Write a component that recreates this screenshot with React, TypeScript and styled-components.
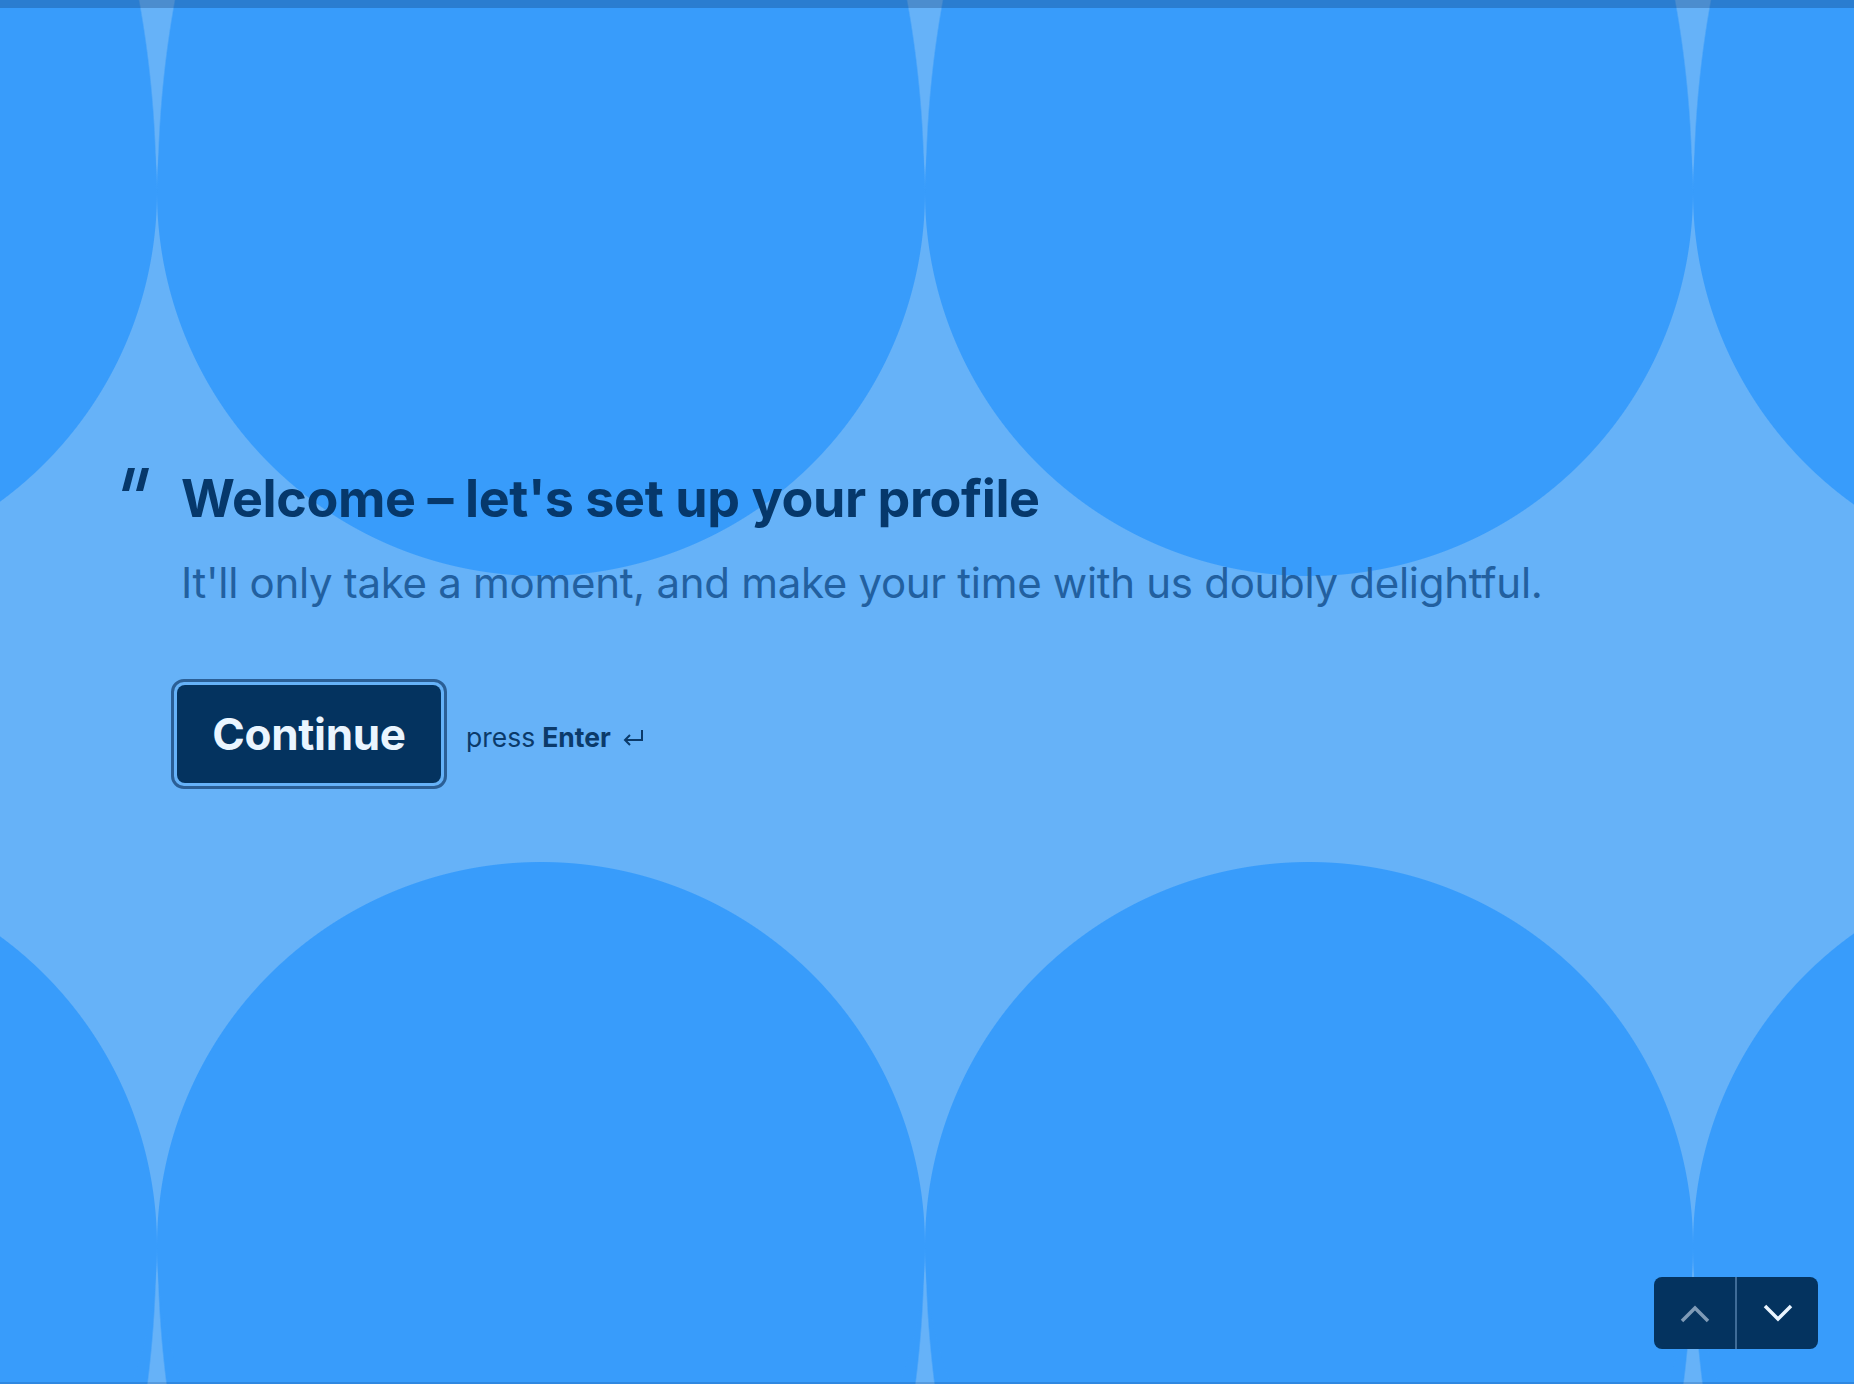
import React from "react";
import styled, { createGlobalStyle } from "styled-components";

const GlobalStyle = createGlobalStyle`
  html, body, #root { margin: 0; padding: 0; height: 100%; }
  body { font-family: Inter, "Noto Sans", "Liberation Sans", sans-serif; }
  * { box-sizing: border-box; }
`;

const CIRCLE = "#389cfb";
const LIGHT = "#66b2f8";

const Page = styled.div`
  position: relative;
  height: 100vh;
  overflow: hidden;
  display: flex;
  flex-direction: column;
  background-color: ${LIGHT};
  background-image:
    radial-gradient(ellipse 384px 650px at 384px 192px, ${CIRCLE} 99.6%, transparent 100%),
    radial-gradient(circle 384px at 384px 192px, ${CIRCLE} 383.5px, transparent 384.5px),
    radial-gradient(circle 384px at 384px 1246px, ${CIRCLE} 383.5px, transparent 384.5px),
    radial-gradient(ellipse 384px 650px at 384px 0px, ${CIRCLE} 99.6%, transparent 100%);
  background-size: 768px 192px, 768px 1384px, 768px 1384px, 768px 140px;
  background-position: 157px 0, 157px 0, 157px 0, 157px 1246px;
  background-repeat: repeat-x, repeat-x, repeat-x, repeat-x;
`;

const ProgressTrack = styled.div`
  height: 8px;
  flex: none;
  background: rgba(0, 30, 80, 0.25);
`;

const Main = styled.main`
  flex: 1;
  padding: 460px 0 0 122px;
`;

const Question = styled.section`
  display: flex;
  align-items: flex-start;
`;

const QuoteMark = styled.svg`
  flex: none;
  width: 28px;
  height: 23px;
  margin: 0 31px 0 0;
  color: #06386b;
`;

const Body = styled.div`
  display: flex;
  flex-direction: column;
`;

const Heading = styled.h1`
  margin: 0;
  font-family: Inter, "Liberation Sans", sans-serif;
  font-weight: 700;
  font-size: 52px;
  line-height: 62px;
  letter-spacing: -0.4px;
  color: #06386b;
`;

const Subtitle = styled.p`
  margin: 26px 0 0;
  font-family: Inter, "Liberation Sans", sans-serif;
  font-weight: 400;
  font-size: 42px;
  line-height: 54px;
  letter-spacing: -0.3px;
  color: #2260a0;
`;

const ActionRow = styled.div`
  display: flex;
  align-items: center;
  gap: 19px;
  margin: 69px 0 0 -10px;
`;

const FocusRing = styled.div`
  padding: 3px;
  border: 3px solid #2b5f96;
  border-radius: 13px;
`;

const PrimaryButton = styled.button`
  display: flex;
  align-items: center;
  justify-content: center;
  width: 264px;
  height: 98px;
  border: none;
  border-radius: 8px;
  background: #04335f;
  color: #eaf5ff;
  font-family: Inter, "Liberation Sans", sans-serif;
  font-weight: 700;
  font-size: 44px;
  letter-spacing: -0.3px;
  cursor: pointer;
`;

const Hint = styled.span`
  display: inline-flex;
  align-items: center;
  gap: 7px;
  font-family: Inter, "Liberation Sans", sans-serif;
  font-size: 26.5px;
  color: #0b3a6a;
  padding-top: 6px;
  b { font-weight: 700; }
`;

const ReturnIcon = styled.svg`
  width: 23px;
  height: 19px;
  margin-left: 4px;
`;

const NavGroup = styled.div`
  position: absolute;
  right: 36px;
  bottom: 35px;
  display: flex;
  height: 72px;
  border-radius: 8px;
  overflow: hidden;
  background: #04335f;
`;

const NavButton = styled.button<{ $dim?: boolean }>`
  width: 81px;
  height: 100%;
  border: none;
  background: transparent;
  display: flex;
  align-items: center;
  justify-content: center;
  color: ${(p) => (p.$dim ? "#7f9bb7" : "#eaf5ff")};
  cursor: pointer;
  padding: 0;
`;

const NavDivider = styled.span`
  width: 2px;
  background: #3f6c98;
`;

const Chevron = styled.svg`
  width: 30px;
  height: 19px;
`;

const BottomEdge = styled.div`
  height: 2px;
  flex: none;
  background: rgba(0, 30, 80, 0.15);
`;

export default function App() {
  return (
    <>
      <GlobalStyle />
      <Page>
        <ProgressTrack />
        <Main>
          <Question>
            <QuoteMark viewBox="0 0 28 23" aria-hidden>
              <polygon points="6,0 13,0 7,23 0,23" fill="currentColor" />
              <polygon points="20,0 27,0 21,23 14,23" fill="currentColor" />
            </QuoteMark>
            <Body>
              <Heading>Welcome – let's set up your profile</Heading>
              <Subtitle>
                It'll only take a moment, and make your time with us doubly delightful.
              </Subtitle>
              <ActionRow>
                <FocusRing>
                  <PrimaryButton>Continue</PrimaryButton>
                </FocusRing>
                <Hint>
                  press <b>Enter</b>
                  <ReturnIcon viewBox="0 0 23 19" aria-hidden>
                    <path
                      d="M20 2 V12 H3 M8 7 L3 12 L8 17"
                      fill="none"
                      stroke="currentColor"
                      strokeWidth="2"
                    />
                  </ReturnIcon>
                </Hint>
              </ActionRow>
            </Body>
          </Question>
        </Main>
        <BottomEdge />
        <NavGroup>
          <NavButton $dim aria-label="Previous">
            <Chevron viewBox="0 0 30 19">
              <polyline points="2,17 15,4 28,17" fill="none" stroke="currentColor" strokeWidth="3.5" />
            </Chevron>
          </NavButton>
          <NavDivider />
          <NavButton aria-label="Next">
            <Chevron viewBox="0 0 30 19">
              <polyline points="2,2 15,15 28,2" fill="none" stroke="currentColor" strokeWidth="3.5" />
            </Chevron>
          </NavButton>
        </NavGroup>
      </Page>
    </>
  );
}
